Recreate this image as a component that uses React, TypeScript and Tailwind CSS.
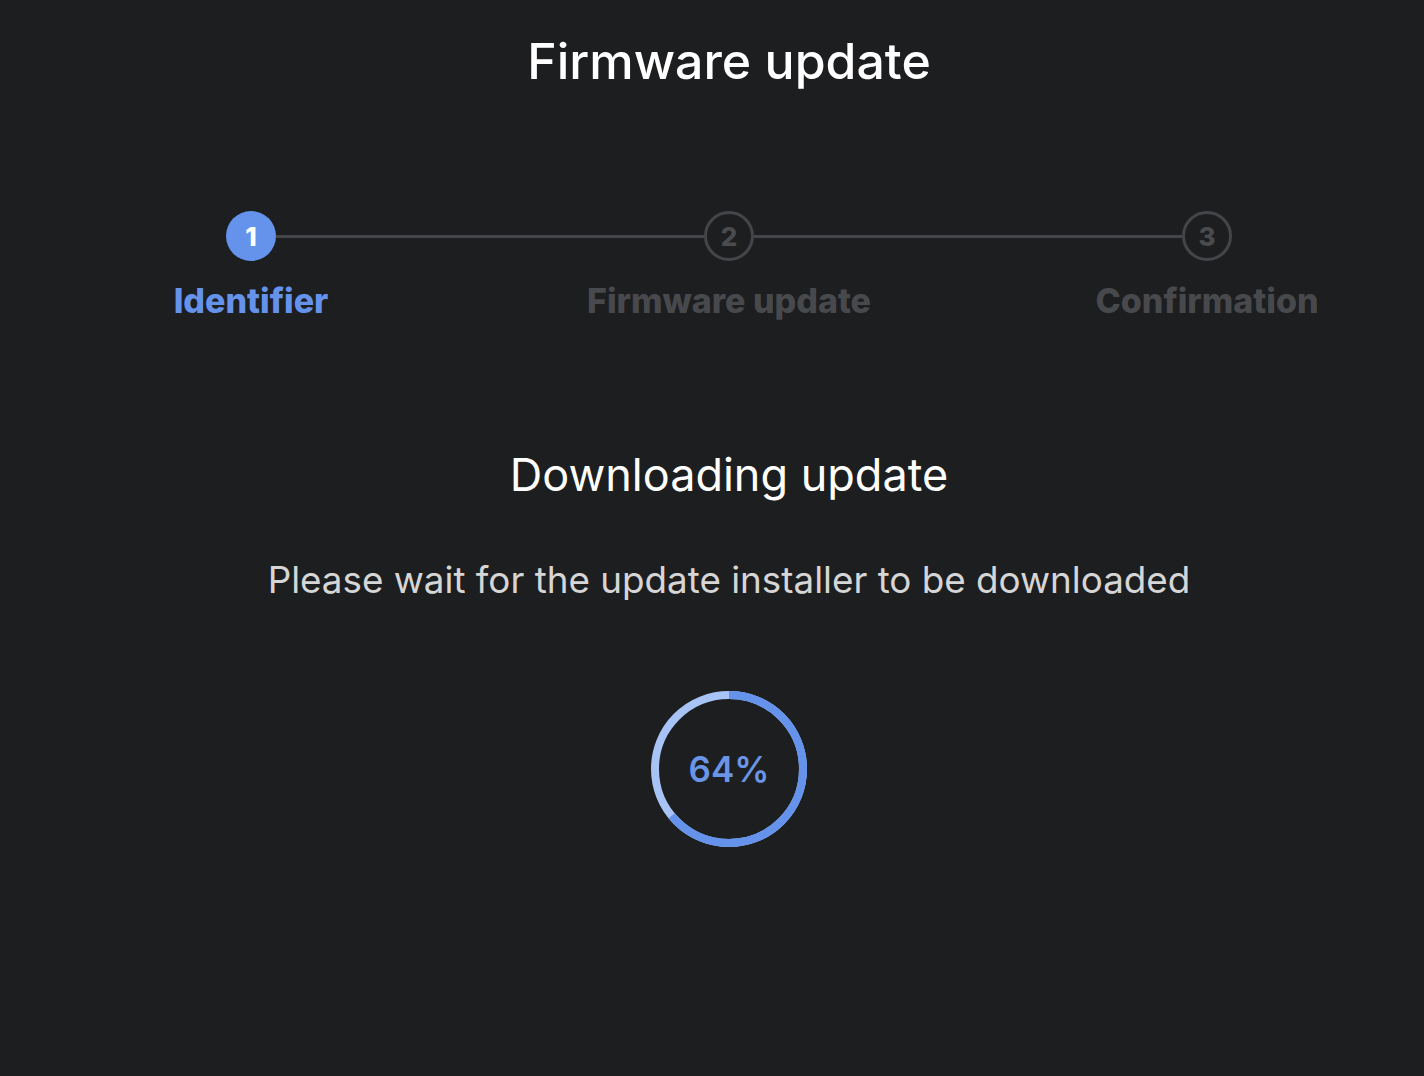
import type { ReactElement } from 'react';

type Step = { n: number; label: string; active: boolean };

const steps: Step[] = [
    { n: 1, label: 'Identifier', active: true },
    { n: 2, label: 'Firmware update', active: false },
    { n: 3, label: 'Confirmation', active: false }
];

const StepCircle = ({ step }: { step: Step }): ReactElement =>
    step.active ? (
        <div className="flex h-[50px] w-[50px] shrink-0 items-center justify-center rounded-full bg-[#6593ec] text-[26px] font-extrabold text-white">
            {step.n}
        </div>
    ) : (
        <div className="flex h-[50px] w-[50px] shrink-0 items-center justify-center rounded-full border-[3px] border-[#444548] text-[26px] font-extrabold text-[#4a4b4e]">
            {step.n}
        </div>
    );

const ProgressRing = ({ value }: { value: number }): ReactElement => {
    const r = 74;
    const c = 2 * Math.PI * r;
    return (
        <div className="relative h-[160px] w-[160px]">
            <svg width="160" height="160" viewBox="0 0 160 160" className="-rotate-90">
                <circle cx="80" cy="80" r={r} fill="none" stroke="#a8c4f6" strokeWidth="8" />
                <circle
                    cx="80"
                    cy="80"
                    r={r}
                    fill="none"
                    stroke="#6593ec"
                    strokeWidth="8"
                    strokeDasharray={`${(c * value) / 100} ${c}`}
                />
            </svg>
            <div className="absolute inset-0 flex items-center justify-center text-[35px] font-semibold text-[#6a95e6]">
                {value}%
            </div>
        </div>
    );
};

export default function App(): ReactElement {
    return (
        <div
            className="min-h-[1076px] w-full overflow-hidden bg-[#1d1e20] pl-[34px] text-white"
            style={{ fontFamily: 'Inter, "Noto Sans", sans-serif' }}
        >
            <div className="flex flex-col items-center">
                <h1 className="mt-[26px] text-[50px] font-medium leading-[70px]">Firmware update</h1>

                <div className="mt-[115px] flex w-[1006px] items-center">
                    <StepCircle step={steps[0]} />
                    <div className="h-[3px] flex-1 bg-[#444548]" />
                    <StepCircle step={steps[1]} />
                    <div className="h-[3px] flex-1 bg-[#444548]" />
                    <StepCircle step={steps[2]} />
                </div>
                <div className="mt-[20px] flex w-[1256px] justify-between">
                    {steps.map((s) => (
                        <div
                            key={s.n}
                            className={`w-[300px] text-center text-[34px] font-extrabold leading-[40px] ${
                                s.active ? 'text-[#6593ec]' : 'text-[#48494c]'
                            }`}
                        >
                            {s.label}
                        </div>
                    ))}
                </div>

                <h2 className="mt-[126px] text-[45px] font-normal leading-[56px]">Downloading update</h2>
                <p className="mt-[55px] text-[36.8px] leading-[44px] text-[#d6d6d6]">
                    Please wait for the update installer to be downloaded
                </p>

                <div className="mt-[87px]">
                    <ProgressRing value={64} />
                </div>
            </div>
        </div>
    );
}
